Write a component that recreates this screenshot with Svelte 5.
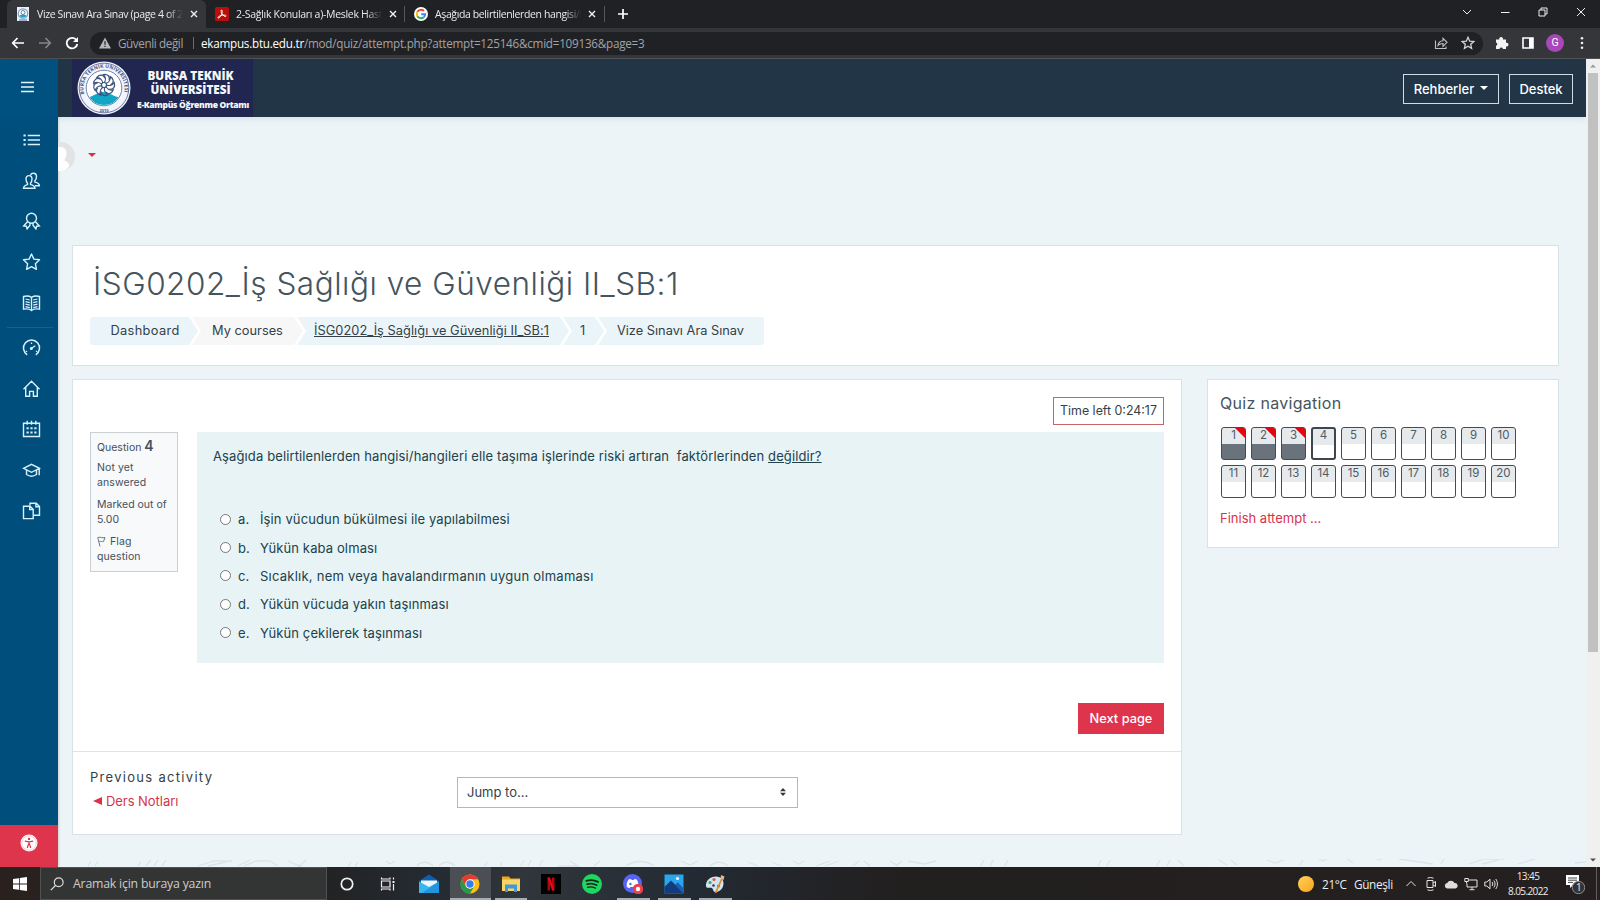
<script>
  const tabs = [
    { icon: 'btu', title: 'Vize Sınavı Ara Sınav (page 4 of 2', cls: 'active' },
    { icon: 'pdf', title: '2-Sağlık Konuları a)-Meslek Hasta', cls: 'second' },
    { icon: 'google', title: 'Aşağıda belirtilenlerden hangisi/h', cls: 'third' }
  ];
  const side = [
    ['list', 'people', 'award', 'star', 'book'],
    ['gauge', 'home', 'calendar', 'cap', 'files']
  ];
  const crumbs = [
    { t: 'Dashboard', c: 'c1' },
    { t: 'My courses', c: 'c2' },
    { t: 'İSG0202_İş Sağlığı ve Güvenliği II_SB:1', c: 'c3' },
    { t: '1', c: 'c4' },
    { t: 'Vize Sınavı Ara Sınav', c: 'c5' }
  ];
  const answers = [
    ['a.', 'İşin vücudun bükülmesi ile yapılabilmesi'],
    ['b.', 'Yükün kaba olması'],
    ['c.', 'Sıcaklık, nem veya havalandırmanın uygun olmaması'],
    ['d.', 'Yükün vücuda yakın taşınması'],
    ['e.', 'Yükün çekilerek taşınması']
  ];
  const quiz = Array.from({ length: 20 }, (_, i) => i + 1);
  const apps = ['cortana', 'tasks', 'mail', 'chrome', 'explorer', 'netflix', 'spotify', 'discord', 'photos', 'paint'];
  const open = ['chrome', 'explorer', 'discord', 'photos', 'paint'];
</script>

{#snippet sideIcon(name)}
  <svg class="side-icon" viewBox="0 0 18 18" fill="none" stroke="#d9f1fb" stroke-width="1.4">
    {#if name === 'list'}
      <path d="M5.300 4.500h12.200M5.300 9h12.200M5.300 13.500h12.200" stroke-width="1.600" />
      <path d="M1 4.500h2.200M1 9h2.200M1 13.500h2.200" stroke-width="2.200" />
    {:else if name === 'people'}
      <path d="M1 16.200c0-2.400 2-3 4-3.600v-1.400C3.600 9.800 3.500 8.500 3.500 7c0-2 1.100-3.400 3-3.400s3 1.400 3 3.400c0 1.500-.2 2.800-1.500 4.200v1.400c2 .6 4.500 1.200 4.500 3.600z" />
      <path d="M8 3.200C8.400 1.900 9.500 1.300 10.900 1.300c2 0 3.100 1.400 3.100 3.500 0 1.500-.3 2.800-1.600 4v1.300c2 .6 4.500 1.200 4.500 3.600h-4.400" />
    {:else if name === 'award'}
      <circle cx="9" cy="6.200" r="5" />
      <path d="M5.200 9.500 1.200 14l2.700.2.700 2.700 2.900-3.600v-2.500M12.800 9.500l4 4.500-2.700.2-.7 2.700-2.900-3.600v-2.500" />
    {:else if name === 'star'}
      <path d="m9 1 2.400 5.100 5.600.7-4.100 3.900 1 5.600L9 13.600l-4.900 2.700 1-5.600L1 6.800l5.600-.7z" stroke-linejoin="round" />
    {:else if name === 'book'}
      <path d="M1 2.500c3-.8 6-.4 8 .8 2-1.200 5-1.600 8-.8v12.600c-3-.5-6-.3-8 1.400-2-1.700-5-1.900-8-1.400zM9 3.300v13" />
      <path d="m3 5 4.300 1M3 7.600l4.300 1M3 10.200l4.300 1M3 12.600l4.300 1M15 5l-4.300 1M15 7.600l-4.300 1M15 10.200l-4.300 1M15 12.600l-4.300 1" stroke-width="1.200" />
    {:else if name === 'gauge'}
      <path d="M4.700 15.800A8 8 0 1 1 13.300 15.800" stroke-width="1.500" />
      <path d="M3.300 12.800 4.600 12M13.400 12l1.300.8M9 3.500v1.500M9 9.300l3.800-2.500" stroke-width="1.300" /><circle cx="8.800" cy="9.400" r=".8" fill="#d9f1fb" />
    {:else if name === 'home'}
      <path d="M1 9.300 9 1.300l8 8M3.200 7.600v8.700h3.900v-4.900h3.800v4.900h3.900V7.600" />
    {:else if name === 'calendar'}
      <path d="M1 3.200h16v13.300H1z" /><path d="M4.700.8v4M9 .8v4M13.300.8v4" />
      <path d="M4 8.300h2.200M7.900 8.300h2.200M11.800 8.300H14M4 12.500h2.200M7.900 12.500h2.200M11.800 12.500H14" stroke-width="2" />
    {:else if name === 'cap'}
      <path d="m1 7.300 8-4 8 4-8 4zM4 9v4.500c3 2 7 2 10 0V9M16.700 7.500v6.800" />
    {:else}
      <path d="M1 4.200h6.500l3.200 3.200v9.200H1zM7.200 4.200v3.400h3.500" /><path d="M7.500 3.600V1.200h6.300L17 4.500v8.700h-5.600M13.400 1.200v3.600H17" />
    {/if}
  </svg>
{/snippet}

{#snippet seal()}
  <svg class="seal" viewBox="0 0 54 54">
    <defs><path id="arc" d="M7.200 33a20.600 20.600 0 1 1 39.600 0" /></defs>
    <circle cx="27" cy="27" r="26.500" fill="#f1f4fa" /><circle cx="27" cy="27" r="24.800" fill="none" stroke="#4b5f93" stroke-width=".8" />
    <circle cx="27" cy="27" r="17.800" fill="#fff" stroke="#7382ae" stroke-width="1" />
    <text font-size="5" fill="#43517f" font-weight="700" font-family="Open Sans, sans-serif"><textPath href="#arc" textLength="74">BURSA TEKNİK ÜNİVERSİTESİ</textPath></text>
    <path d="M12.500 36c3-1 6-3 9-3.800 3-1.500 6-1.500 9 0 4 .6 6 3 11 3.800-3 5-8 8-14.500 8S15.500 41 12.500 36z" fill="#10a6c4" />
    <g fill="none" stroke="#3f537f" stroke-width="1.200">
      {#each [0, 40, 80, 120, 160, 200, 240, 280, 320] as a}<path d="M27 22c2-2.500 2-6-.5-8.500 4-.6 7 2 5.500 6" transform={`rotate(${a} 27 24)`} />{/each}
      <circle cx="27" cy="24" r="2.500" fill="#fff" />
    </g>
    <text x="27" y="50.500" text-anchor="middle" font-size="4" fill="#43517f" font-family="Open Sans, sans-serif" font-weight="700">2010</text>
  </svg>
{/snippet}

{#snippet chrome()}
  <svg viewBox="0 0 20 20" class="app-icon chromei">
    <circle cx="10" cy="10" r="9.500" fill="#fbc116" />
    <path d="M1.770 5.250A9.500 9.500 0 0 1 18.230 5.250H10L5.900 12.400z" fill="#e33b2e" />
    <path d="M1.770 5.250A9.500 9.500 0 0 0 10 19.500l4.100-7.100L10 14.700 5.900 12.400z" fill="#269a4b" />
    <circle cx="10" cy="10" r="4.700" fill="#fff" /><circle cx="10" cy="10" r="3.700" fill="#3a7ced" />
  </svg>
{/snippet}

<div class="screen">
  <div class="tabs">
    {#each tabs as tab}
      <div class="tab {tab.cls}">
        {#if tab.icon === 'btu'}
          <svg class="fav" viewBox="0 0 14 14"><path fill="#e9f1f8" d="M1 0h12v14H1z" /><circle cx="7" cy="6.500" r="4.700" fill="#fff" stroke="#7f9dc0" stroke-width="1.200" /><circle cx="7" cy="5.500" r="2" fill="none" stroke="#6580a8" /><path d="M3.500 8.500c2-1.300 5-1.300 7 0C9.500 11 4.500 11 3.500 8.500" fill="#16a6c6" /><path d="M3 13h8" stroke="#56709d" /></svg>
        {:else if tab.icon === 'pdf'}
          <svg class="fav" viewBox="0 0 14 14"><rect width="14" height="14" rx="1.500" fill="#b90f0a" /><path d="M6.500 3c1.200 0 .8 2.800-.2 4.900C5.400 9.800 4 11.300 3.200 11c-1-.7 1.700-2.500 4.100-2.800 2-.4 4 0 3.700 1-.6 1-3-.7-4-2.400C6 5.200 5.800 3 6.500 3z" fill="none" stroke="#fff" stroke-width="1" /></svg>
        {:else}
          <svg class="fav" viewBox="0 0 14 14"><circle cx="7" cy="7" r="7" fill="#fff" /><g fill="none" stroke-width="1.900"><path d="M3.400 4.800A4.200 4.200 0 0 1 9.900 4" stroke="#e94335" /><path d="M3.400 4.800A4.200 4.200 0 0 0 3.400 9.200" stroke="#fabb05" /><path d="M3.400 9.200A4.200 4.200 0 0 0 9.700 10.200" stroke="#34a853" /><path d="M9.700 10.200A4.200 4.200 0 0 0 11.200 7.200H7.200" stroke="#4285f4" /></g></svg>
        {/if}
        <span class="tab-title">{tab.title}</span>
        <svg class="close" viewBox="0 0 8 8"><path d="m1 1 6 6M7 1 1 7" stroke="#f1f1f1" stroke-width="1.400" /></svg>
      </div>
    {/each}
    <svg class="plus" viewBox="0 0 12 12"><path d="M6 1v10M1 6h10" stroke="#fff" stroke-width="1.700" /></svg>
    <div class="win">
      <svg viewBox="0 0 12 12"><path d="m2 4 4 4 4-4" /></svg>
      <svg viewBox="0 0 12 12"><path d="M2 6.500h8.500" /></svg>
      <svg viewBox="0 0 12 12"><path d="M2 4h6v6H2zM4 4V2h6v6H8" /></svg>
      <svg viewBox="0 0 12 12"><path d="m2 2 8 8M10 2l-8 8" /></svg>
    </div>
  </div>

  <div class="toolbar">
    <svg class="nav" viewBox="0 0 14 14"><path d="M13 7H2M6.500 2 1.700 7l4.800 5" stroke="#fff" /></svg>
    <svg class="nav" viewBox="0 0 14 14"><path d="M1 7h11M7.500 2l4.800 5-4.800 5" stroke="#85868a" /></svg>
    <svg class="nav" viewBox="0 0 14 14"><path d="M11.500 4.200A5.300 5.300 0 1 0 12.300 8" stroke="#fff" stroke-width="1.800" /><path d="M13 1v5H8z" fill="#fff" /></svg>
    <div class="omni">
      <svg class="warn" viewBox="0 0 12 12"><path d="M6 .5 12 11.500H0z" fill="#b4b6b9" /><path d="M6 4.300v3.500M6 8.800V10" stroke="#202124" stroke-width="1.200" /></svg>
      <span class="unsafe">Güvenli değil</span><i></i>
      <span class="url"><b>ekampus.btu.edu.tr</b><span>/mod/quiz/attempt.php?attempt=125146&amp;cmid=109136&amp;page=3</span></span>
      <svg class="share" viewBox="0 0 14 14" fill="none" stroke="#bfc1c4" stroke-width="1.100"><path d="M1.500 4.500v8h10.500V10.500M4 9.500c.3-3 2-4.500 5-4.700V2.300l4 4-4 4V7.500C7 7.500 5.300 8 4 9.500z" /></svg>
      <svg class="bm" viewBox="0 0 14 14" fill="none" stroke="#d2d3d5" stroke-width="1.300"><path d="m7 1.300 1.700 3.900 4.100.4-3.100 2.700.9 4.100L7 10.200l-3.600 2.200.9-4.100L1.200 5.600l4.100-.4z" /></svg>
    </div>
    <svg class="ext" viewBox="0 0 14 14"><path d="M1 3.500h3.300a1.900 1.900 0 1 1 3.600 0H11v3.300a1.900 1.900 0 1 1 0 3.600V13H8a1.800 1.800 0 0 0-3.500 0H1V9.800a1.700 1.700 0 0 0 0-3.300z" fill="#f4f4f4" /></svg>
    <svg class="panel" viewBox="0 0 12 12"><path d="M1 1h10v10H1z" fill="none" stroke="#fff" stroke-width="1.600" /><path d="M7 1h4v10H7z" fill="#fff" /></svg>
    <span class="avatar">G</span>
    <svg class="dots" viewBox="0 0 4 14"><circle cx="2" cy="2.300" r="1.300" /><circle cx="2" cy="7" r="1.300" /><circle cx="2" cy="11.700" r="1.300" /></svg>
  </div>

  <div class="page">
    <aside>
      <div class="burger"><svg viewBox="0 0 14 12"><path d="M0 1.500h13M0 6h13M0 10.500h13" stroke="#e6f5fb" stroke-width="1.300" /></svg></div>
      <nav>
        {#each side as group, g}
          <div class="group g{g}">
            {#each group as name}<div class="side-item">{@render sideIcon(name)}</div>{/each}
          </div>
        {/each}
      </nav>
      <div class="access"><svg viewBox="0 0 18 18"><circle cx="9" cy="9" r="8.500" fill="#fff" /><circle cx="9" cy="9" r="7.200" fill="none" stroke="#f3a9b2" stroke-width=".6" /><circle cx="9" cy="4.900" r="1.200" fill="#de344c" /><path d="M4.800 7.200 9 7.800l4.200-.6M9 7.500v3M7.300 14 8.500 10h1l1.200 4" stroke="#de344c" stroke-width="1.200" fill="none" /></svg></div>
    </aside>

    <div class="body">
      <header>
        <div class="brand">
          {@render seal()}
          <div class="brand-text"><b class="b1">BURSA TEKNİK</b><b class="b2">ÜNİVERSİTESİ</b><b class="b3">E-Kampüs Öğrenme Ortamı</b></div>
        </div>
        <div class="hbtn h1b"><span>Rehberler</span><i></i></div>
        <div class="hbtn h2b"><span>Destek</span></div>
      </header>

      <div class="user">
        <svg class="face" viewBox="0 0 29 29"><circle cx="14.500" cy="14.500" r="14.500" fill="#e1e3e4" /><path d="M14.500 5c4 0 6 3 6 6.500S19 16 18.300 18.500c2 .6 4.500 1.500 5 5.500-2 3-5 5-8.800 5s-8-2-9-5c.5-4 3-4.900 5-5.500C9.800 16 8.500 15 8.500 11.500S10.500 5 14.500 5z" fill="#fff" /></svg>
        <i></i>
      </div>

      <section class="card heading">
        <h1>İSG0202_İş Sağlığı ve Güvenliği II_SB:1</h1>
        <div class="crumbs">
          {#each crumbs as c}<span class="crumb {c.c}"><span>{c.t}</span></span>{/each}
        </div>
      </section>

      <div class="columns">
        <main class="card">
          <div class="timer"><span>Time left 0:24:17</span></div>
          <div class="question">
            <div class="info">
              <div class="qno">Question <b>4</b></div>
              <div class="state">Not yet<br />answered</div>
              <div class="grade">Marked out of<br />5.00</div>
              <div class="flag"><svg viewBox="0 0 9 11"><path d="M1 1v1.500l2 8M1 1.500c2.500-1 4 1 7 0L6.500 5.500C5 6 4 5 2.300 5.500" fill="none" stroke="#6c7780" /></svg>Flag<br />question</div>
            </div>
            <div class="formulation">
              <p>Aşağıda belirtilenlerden hangisi/hangileri elle taşıma işlerinde riski artıran&nbsp; faktörlerinden <u>değildir?</u></p>
              <div class="answers">
                {#each answers as [k, t], n}
                  <div class="answer"><span class="radio"></span><span class="key">{k}</span><span class="txt" class:wide={n === 2}>{t}</span></div>
                {/each}
              </div>
            </div>
          </div>
          <div class="submit"><span class="next">Next page</span></div>
          <footer>
            <div class="prev"><div class="pt">Previous activity</div><div class="pl"><svg viewBox="0 0 9 8"><path d="M9 0v8L0 4z" fill="#d9334a" /></svg><span>Ders Notları</span></div></div>
            <div class="select"><span>Jump to...</span><svg viewBox="0 0 6 8"><path d="M0 3.300 3 0l3 3.300zM0 4.700 3 8l3-3.300z" fill="#343a40" /></svg></div>
          </footer>
        </main>

        <section class="card quiz">
          <h2>Quiz navigation</h2>
          <div class="grid">
            {#each quiz as n}<div class="q" class:done={n < 4} class:current={n === 4}><span>{n}</span></div>{/each}
          </div>
          <div class="finish">Finish attempt ...</div>
        </section>
      </div>
      <svg class="pattern" viewBox="0 0 1528 8" fill="none" stroke="#dbe4e8" stroke-width="1.300">
        <path d="m30 7 3-5m4 5 3-5m40 5 3-4m5 4 5-6m3 6 4-6m4 6 4-6m32 6 16-5h18m-24 5 18-4m12 4 12-6m-6 6 12-5h14l8 5m10-5 14 6m4-7-8 7m50 0 3-5m4 5 3-5m28-1 4 3 5-3m22 5c4-5 11-5 16 0m6 0c4-5 11-5 16 0m30 0 2-4m14 4v-4m20 4 3-6m4 6 3-6m8 6 4-6m15 6h20l-8-5m24 5 6-5m26 5c9-6 20-6 28 0m27-5 9 4 8-4m12 5c5-5 12-5 18 0m20-4 10 4m14-4 9 4m12-5 6 3 5-3m12 5 14-5m-5 5 14-5m14 5 6-5m5 0 6 5m20-5 8 5m4-5-6 5m12-5 16 3 12-3m45 5 3-6m6 6 3-6m12 6 3-6m90 6 3-6m6 6 3-6m47 6 3-6m7 6 3-6m8 0 6 6m35-6 8 5m4-5 6 5m30-5 8 3 9-3m16 5 3-5m14-2 6 3 5-3m18 0 7 5m20-6 6 3 6-3m14 2 34 5m8 0 3-5m25 5 15-5h20m-22 5 16-4m20 4 17-5m40 4 20-2 26 3" />
      </svg>
    </div>
    <div class="scroll"><svg viewBox="0 0 14 14"><path d="M4 8.500 7 5.500l3 3z" fill="#9a9a9a" /></svg><div class="thumb"></div><svg viewBox="0 0 14 14"><path d="m4 5.500 3 3 3-3z" fill="#505050" /></svg></div>
  </div>

  <div class="taskbar">
    <div class="start"><svg viewBox="0 0 14 14"><path d="M0 2 6 1.200v5.400H0zM6.800 1 14 0v6.600H6.800zM0 7.400h6v5.400L0 12zM6.800 7.400H14V14l-7.200-1z" fill="#fff" /></svg></div>
    <div class="search"><svg viewBox="0 0 14 14"><circle cx="8.700" cy="5.300" r="4.400" /><path d="M5.500 8.500.8 13.200" /></svg><span>Aramak için buraya yazın</span></div>
    <div class="apps">
      {#each apps as a}
        <div class="app" class:open={open.includes(a)} class:on={a === 'chrome'}>
          {#if a === 'cortana'}
            <svg class="app-icon" viewBox="0 0 20 20"><circle cx="10" cy="10" r="5.700" fill="none" stroke="#f2f2f2" stroke-width="1.700" /></svg>
          {:else if a === 'tasks'}
            <svg class="app-icon" viewBox="0 0 20 20" fill="none" stroke="#f2f2f2" stroke-width="1.200"><path d="M3.500 7h8.500v6H3.500zM3.500 3.500V5H12V3.500M3.500 16.500V15H12v1.500M15.500 3.500v2M15.500 10v6.500" /><path d="M14.500 8h2" stroke-width="2" /></svg>
          {:else if a === 'mail'}
            <svg class="app-icon" viewBox="0 0 20 20"><path d="m0 7 10-6.500L20 7v3H0z" fill="#0f5fae" /><path d="M2 6.500h16V13H2z" fill="#eef6fb" /><path d="M0 7.500 10 13l10-5.500V19H0z" fill="#35b8f1" /><path d="M20 7.500V19H3z" fill="#2196dd" /></svg>
          {:else if a === 'chrome'}
            {@render chrome()}
          {:else if a === 'explorer'}
            <svg class="app-icon" viewBox="0 0 20 20"><path d="M1 2.500h7l1.500 2H19V17H1z" fill="#e8a820" /><path d="M1 5.500h18V17H1z" fill="#fbd469" /><path d="M4 10.500h12V18h-3v-3.500H7V18H4z" fill="#3f9bd8" /></svg>
          {:else if a === 'netflix'}
            <svg class="app-icon" viewBox="0 0 20 20"><path d="M0 0h20v20H0z" fill="#000" /><path d="M6.500 3.500H9V16.500H6.500zM11 3.500h2.500v13H11z" fill="#b20710" /><path d="M6.500 3.500H9l4.500 13H11z" fill="#e50914" /></svg>
          {:else if a === 'spotify'}
            <svg class="app-icon" viewBox="0 0 20 20"><circle cx="10" cy="10" r="10" fill="#1ed760" /><g fill="none" stroke="#15251b" stroke-linecap="round"><path d="M4.300 6.800c4-1.200 8-.8 11.700 1" stroke-width="1.900" /><path d="M5 10.200c3.500-1 6.700-.6 9.800 1" stroke-width="1.600" /><path d="M5.500 13.300c3-.8 5.500-.4 8 .9" stroke-width="1.300" /></g></svg>
          {:else if a === 'discord'}
            <svg class="app-icon" viewBox="0 0 20 20"><circle cx="9.500" cy="9.500" r="9.500" fill="#5865f2" /><path d="M5.500 5.500 8 5l.6 1h2.200l.6-1 2.300.5c1.500 2.300 2 4.800 1.800 7.400l-2.800 1.300-.8-1.300H7.300l-.8 1.300-2.700-1.300C3.500 10 4 7.700 5.500 5.500z" fill="#fff" /><circle cx="7.400" cy="10" r="1.200" fill="#5865f2" /><circle cx="15" cy="15" r="5.300" fill="#ed4245" /><circle cx="15" cy="15" r="2.200" fill="#fff" /></svg>
          {:else if a === 'photos'}
            <svg class="app-icon" viewBox="0 0 20 20"><path d="M.5.500h19v19H.5z" fill="#2ba5eb" /><path d="m.5 13 6.500-6.500L19.500 19v.5H.5z" fill="#123c7b" /><path d="m11 10.800 2.800-2.300 5.700 5.700v5.300z" fill="#1d5db4" /><circle cx="13.500" cy="4.500" r="1.600" fill="#eaf8ff" /></svg>
          {:else}
            <svg class="app-icon" viewBox="0 0 20 20"><path d="M1 12C.6 6.500 5.500 2.500 11 2.600c4 .1 7.500 2.500 7.500 6.600 0 4.200-3 8.800-8 8.800-3 0-1.800-3.500-4-4.200C4.300 13.200 1.500 15 1 12z" fill="#cfe6f2" /><circle cx="5" cy="8.500" r="1.600" fill="#40a65b" /><circle cx="9" cy="5.500" r="1.600" fill="#e2574c" /><circle cx="13.500" cy="12" r="1.500" fill="#3d74c8" /><circle cx="8.500" cy="11.500" r="1.300" fill="#30414d" /><path d="M10.500 19 17 4.500" stroke="#e28c2e" stroke-width="1.800" /><path d="m15.500 4.500.5-3.500 3.500 1.500-1 3.500z" fill="#e7b77c" /></svg>
          {/if}
        </div>
      {/each}
    </div>
    <div class="tray">
      <span class="sun"></span><span class="temp">21°C</span><span class="wx">Güneşli</span>
      <svg class="up" viewBox="0 0 14 14"><path d="m2.500 9 4.500-4.500L11.500 9" /></svg>
      <svg class="meet" viewBox="0 0 14 14"><path d="M3 3.500h6v7H3zM9 6l2.500-1.500v5L9 8M3.500 1.200c2-.8 4-.8 6 0M3.500 12.800c2 .8 4 .8 6 0" /></svg>
      <svg class="cloud" viewBox="0 0 14 10"><path d="M3 9.500a2.800 2.800 0 0 1 .2-5.500A4 4 0 0 1 10.500 4 2.800 2.800 0 0 1 11.500 9.500z" fill="#ddd" stroke="none" /></svg>
      <svg class="net" viewBox="0 0 14 14"><path d="M4.500 3H13v7H3V6.500M8 10v2.500M5.500 12.700h5M.8 1.500h3.500v3H.8zM2.500 4.500v2" /></svg>
      <svg class="vol" viewBox="0 0 14 14"><path d="M.8 5h2L6 2.200v9.600L2.800 9h-2zM8 5c1 1.200 1 2.800 0 4M9.800 3.500c1.700 2 1.700 5 0 7M11.700 2c2.300 3 2.300 7 0 10" /></svg>
      <div class="clock"><span class="hm">13:45</span><span class="date">8.05.2022</span></div>
      <div class="note"><svg viewBox="0 0 20 20"><path d="M1 1h13v10H8l-3 3v-3H1z" fill="#fff" /><path d="M3 4h9M3 6.200h9M3 8.400h5" stroke="#444" /><circle cx="13.500" cy="13.500" r="6.200" fill="#343434" stroke="#8d8d8d" /></svg><span>1</span></div>
      <i></i>
    </div>
  </div>
</div>

<style>
  :global(body) { margin: 0; overflow: hidden; }
  .screen { width: 1600px; height: 900px; display: flex; flex-direction: column; overflow: hidden; font-family: Inter, sans-serif; color: #343f48; white-space: nowrap; box-sizing: border-box; }
  .screen *, .screen *::before, .screen *::after { box-sizing: border-box; }
  svg { display: block; flex: none; }
  .tabs { height: 28px; flex: none; display: flex; align-items: center; background: #202124; padding-left: 7px; font: 10.500px "Open Sans", sans-serif; color: #e9eaeb; }
  .tab { height: 28px; display: flex; align-items: center; width: 199px; padding-left: 9px; }
  .tab.active { background: #35363a; border-radius: 6px 6px 0 0; }
  .tab.second { border-right: 1px solid #55575a; height: 16px; }
  .tab.third { border-right: 1px solid #55575a; height: 16px; width: 200px; }
  .fav { width: 14px; height: 14px; margin-right: 7px; }
  .tab-title { width: 146px; letter-spacing: -.38px; -webkit-mask-image: linear-gradient(90deg, #000 89%, transparent); mask-image: linear-gradient(90deg, #000 89%, transparent); }
  .second .tab-title { letter-spacing: -.3px; }
  .third .tab-title { letter-spacing: -.38px; }
  .close { width: 8px; height: 8px; margin-left: 7px; }
  .plus { width: 12px; height: 12px; margin-left: 12px; }
  .win { margin-left: auto; display: flex; gap: 26px; padding-right: 13px; margin-top: -4px; }
  .win svg { width: 12px; height: 12px; fill: none; stroke: #eee; stroke-width: 1; }
  .toolbar { height: 31px; flex: none; background: #35363a; border-bottom: 1px solid #515256; display: flex; align-items: center; padding-left: 11px; }
  .nav { width: 14px; height: 14px; margin-right: 13px; fill: none; stroke-width: 1.700; }
  .omni { width: 1393px; height: 23px; margin-left: -2px; border-radius: 12px; background: #202124; display: flex; align-items: center; padding: 0 8px 0 9px; font: 11.700px "Open Sans", sans-serif; color: #a0a3a7; }
  .warn { width: 12px; height: 12px; margin-right: 7px; }
  .omni i { width: 1px; height: 12px; background: #6a6c70; margin: 0 7px; }
  .unsafe { width: 68px; letter-spacing: -.4px; }
  .url { flex: 1; letter-spacing: -.25px; }
  .url b { font-weight: 400; color: #fff; }
  .share, .bm { width: 14px; height: 14px; }
  .bm { margin-left: 13px; }
  .ext { width: 14px; height: 14px; margin-left: 12px; }
  .panel { width: 12px; height: 12px; margin-left: 13px; }
  .avatar { width: 18px; height: 18px; border-radius: 9px; background: #a847b8; color: #fff; font: 10.500px/18px Roboto, sans-serif; text-align: center; margin-left: 12px; }
  .dots { width: 4px; height: 14px; margin-left: 16px; fill: #f1f1f1; }

  .page { flex: 1; min-height: 0; display: flex; background: #ecf4f7; }
  aside { width: 58px; background: #004e7c; display: flex; flex-direction: column; box-shadow: 1px 0 2px #0002; }
  .burger { height: 58px; background: #00517f; padding: 22px 0 0 21px; }
  .burger svg { width: 14px; height: 12px; }
  nav { flex: 1; padding-top: 3px; }
  .group { padding: 0 0 0 22px; }
  .side-item { height: 40.600px; display: flex; align-items: center; }
  .side-icon { width: 19px; height: 18px; }
  .g0 { position: relative; height: 208px; }
  .g0::after { content: ''; position: absolute; left: 7px; right: 5px; bottom: 0; height: 1px; background: #4d4f60; }
  .access { height: 42px; background: #de344c; padding: 9px 0 0 20px; }
  .access svg { width: 18px; height: 18px; }
  .body { flex: 1; min-width: 0; display: flex; flex-direction: column; overflow: hidden; }
  header { height: 58px; flex: none; background: #213547; display: flex; padding-right: 13px; box-shadow: 0 2px 6px #1d36501a; }
  .brand { margin-left: 14px; width: 181px; background: #20264f; display: flex; padding: 2px 0 0 5px; margin-right: auto; }
  .seal { width: 54px; height: 54px; }
  .brand-text { width: 122px; display: flex; flex-direction: column; align-items: center; color: #f5f6fa; font: 700 11.700px/14px "Open Sans", sans-serif; padding: 7px 3px 0 0; }
  .brand-text b { transform: none; }
  .b3 { font-size: 8.500px; line-height: 17px; letter-spacing: -.3px; margin-right: -5px; }
  .hbtn { height: 30px; margin-top: 15px; border: 1px solid #cfdce4; color: #fff; font-size: 13px; font-weight: 500; display: flex; align-items: center; justify-content: center; }
  .h1b { width: 96px; margin-right: 10px; }
  .h2b { width: 64px; }
  .hbtn i { border: 4px solid transparent; border-top-color: #fff; border-bottom: 0; margin-left: 6px; margin-top: -3px; }
  .user { height: 128px; flex: none; padding-top: 25px; display: flex; }
  .face { width: 29px; height: 29px; margin-left: -12px; }
  .user i { border: 4px solid transparent; border-top-color: #dc3048; border-bottom: 0; height: 0; margin: 11px 0 0 13px; }
  .card { background: #fff; border: 1px solid #d8e1e6; }
  .heading { margin-left: 14px; width: 1487px; height: 121px; flex: none; padding: 18px 0 0 17px; }
  h1 { margin: 0; font-size: 31.500px; letter-spacing: .52px; line-height: 40px; font-weight: 300; color: #45555d; padding-left: 3px; height: 53px; }
  .crumbs { display: flex; width: 674px; height: 28px; border-radius: 3px; overflow: hidden; font-size: 12.800px; line-height: 28px; }
  .crumb { background: #ebf4f8; clip-path: polygon(0 0, calc(100% - 9px) 0, 100% 50%, calc(100% - 9px) 100%, 0 100%, 9px 50%); margin-right: -6px; text-align: center; flex: none; }
  .c1 { width: 108px; letter-spacing: .35px; padding-left: 2px; clip-path: polygon(0 0, calc(100% - 9px) 0, 100% 50%, calc(100% - 9px) 100%, 0 100%); }
  .c2 { width: 111px; background: #f7f7f7; }
  .c3 { width: 272px; letter-spacing: .05px; padding-right: 3px; text-decoration: underline; }
  .c4 { width: 41px; padding-right: 2px; }
  .c5 { width: 166px; margin: 0; padding-right: 1px; clip-path: polygon(0 0, 100% 0, 100% 100%, 0 100%, 9px 50%); }
  .columns { display: flex; align-items: flex-start; gap: 25px; margin: 13px 0 0 14px; }
  main { width: 1110px; height: 456px; padding-top: 17px; }
  .timer { height: 28px; display: flex; justify-content: flex-end; padding-right: 17px; }
  .timer span { width: 111px; border: 1px solid #ca6567; font-size: 12.400px; line-height: 26px; text-align: center; }
  .question { display: flex; margin: 7px 17px 0; gap: 19px; align-items: flex-start; }
  .info { width: 88px; height: 140px; border: 1px solid #cbcfd2; background: #f8f9fb; padding: 3px 0 0 6px; font-size: 10.500px; line-height: 15px; color: #45505a; }
  .qno { line-height: 20px; height: 23px; }
  .qno b { font-size: 14px; font-weight: 600; }
  .state { margin-top: 1px; letter-spacing: .1px; }
  .grade { margin-top: 7px; }
  .flag { margin-top: 7px; letter-spacing: .1px; }
  .flag svg { width: 9px; height: 11px; float: left; margin: 2px 4px 0 0; }
  .formulation { flex: 1; height: 231px; background: #e7f3f5; padding: 14px 0 0 16px; font-size: 13px; letter-spacing: .12px; color: #21414b; }
  p { margin: 0; line-height: 20px; }
  .answers { margin: 39px 0 0 7px; }
  .answer { height: 28.350px; display: flex; align-items: center; }
  .wide { letter-spacing: .24px; }
  .radio { width: 11px; height: 11px; border-radius: 50%; border: 1px solid #777; background: #fff; margin-right: 7px; }
  .key { width: 22px; }
  .submit { display: flex; justify-content: flex-end; padding: 40px 17px 0 0; }
  .next { width: 86px; height: 31px; background: #de344c; color: #fff; font-size: 12.800px; font-weight: 500; line-height: 31px; text-align: center; }
  footer { margin-top: 17px; border-top: 1px solid #dde3e7; display: flex; padding: 15px 0 0 17px; }
  .prev { width: 367px; font-size: 13px; line-height: 20px; }
  .pt { letter-spacing: 1.300px; }
  .pl { display: flex; align-items: center; color: #d9334a; margin-top: 4px; padding-left: 3px; letter-spacing: -.05px; }
  .pl svg { width: 9px; height: 8px; margin-right: 4px; }
  .select { width: 341px; height: 31px; margin-top: 10px; border: 1px solid #b5b8ba; display: flex; align-items: center; justify-content: space-between; padding: 0 11px 1px 9px; font-size: 13px; }
  .select svg { width: 6px; height: 8px; }
  .quiz { width: 352px; height: 169px; padding: 12px 0 0 12px; }
  h2 { margin: 0; font-size: 16px; letter-spacing: .3px; font-weight: 400; line-height: 22px; color: #45555d; }
  .grid { display: grid; grid-template-columns: repeat(10, 25px); grid-auto-rows: 33.500px; gap: 4.500px 5px; margin: 12.500px 0 0 1px; }
  .q { position: relative; border: 1px solid #454b51; border-radius: 3px; background: linear-gradient(#e6eaed 16px, #fff 16px); font-size: 11.500px; line-height: 15px; text-align: center; color: #4f5a64; overflow: hidden; }
  .done { background: linear-gradient(#e6eaed 16px, #6a737c 16px); }
  .done::after { content: ''; position: absolute; top: 0; right: 0; border: 5px solid #df0812; border-left-color: transparent; border-bottom-color: transparent; }
  .current { border: 2px solid #3f464c; line-height: 13px; }
  .finish { color: #d9334a; font-size: 13px; line-height: 20px; margin-top: 10px; }
  .pattern { width: 1528px; height: 8px; margin-top: auto; }
  .scroll { width: 14px; background: #f0f0f1; display: flex; flex-direction: column; }
  .scroll > svg { width: 14px; height: 14px; }
  .thumb { margin: 0 2px; height: 579px; background: #c1c1c1; margin-bottom: auto; }

  .taskbar { height: 33px; flex: none; display: flex; background: linear-gradient(90deg, #2a211e 0, #222324 330px, #252c34 450px, #30363b 520px, #222a33 700px, #221f1f 900px, #251f20 1600px); font-family: "Open Sans", sans-serif; color: #eee; }
  .start { width: 40px; padding: 10px 0 0 13px; }
  .start svg { width: 14px; height: 14px; }
  .search { width: 287px; background: #333434; border: 1px solid #515151; display: flex; align-items: center; font-size: 12.300px; letter-spacing: -.2px; padding-left: 9px; color: #ccc; }
  .search svg { width: 14px; height: 14px; fill: none; stroke: #ddd; stroke-width: 1.200; margin-right: 9px; }
  .apps { display: flex; }
  .app { width: 40.900px; height: 33px; padding: 7px 0 0 10px; position: relative; }
  .app-icon { width: 20px; height: 20px; }
  .open::after { content: ''; position: absolute; left: 4px; right: 4px; bottom: 0; height: 2px; background: #a9adb3; }
  .on { background: #4b4f54; }
  .on::after { left: 0; right: 0; }
  .tray { margin-left: auto; display: flex; align-items: center; font-size: 11.800px; letter-spacing: -.35px; }
  .tray > svg { fill: none; stroke: #e5e5e5; stroke-width: 1; width: 14px; height: 14px; }
  .sun { width: 16px; height: 16px; border-radius: 50%; background: linear-gradient(135deg, #ffd25c, #fba51c); margin-right: 8px; }
  .temp { width: 32px; }
  .wx { width: 50px; }
  .tray .cloud { height: 10px; }
  .tray .meet, .tray .cloud, .tray .net, .tray .vol { margin-left: 6px; }
  .clock { width: 60px; display: flex; flex-direction: column; align-items: center; font-size: 10px; line-height: 15px; letter-spacing: -.6px; }
  .note { position: relative; width: 20px; height: 20px; margin-left: 7px; }
  .note svg { width: 20px; height: 20px; }
  .note span { position: absolute; left: 11px; top: 6px; font-size: 10px; line-height: 15px; }
  .tray i { width: 1px; height: 33px; background: #626060; margin: 0 3px 0 11px; }
</style>
